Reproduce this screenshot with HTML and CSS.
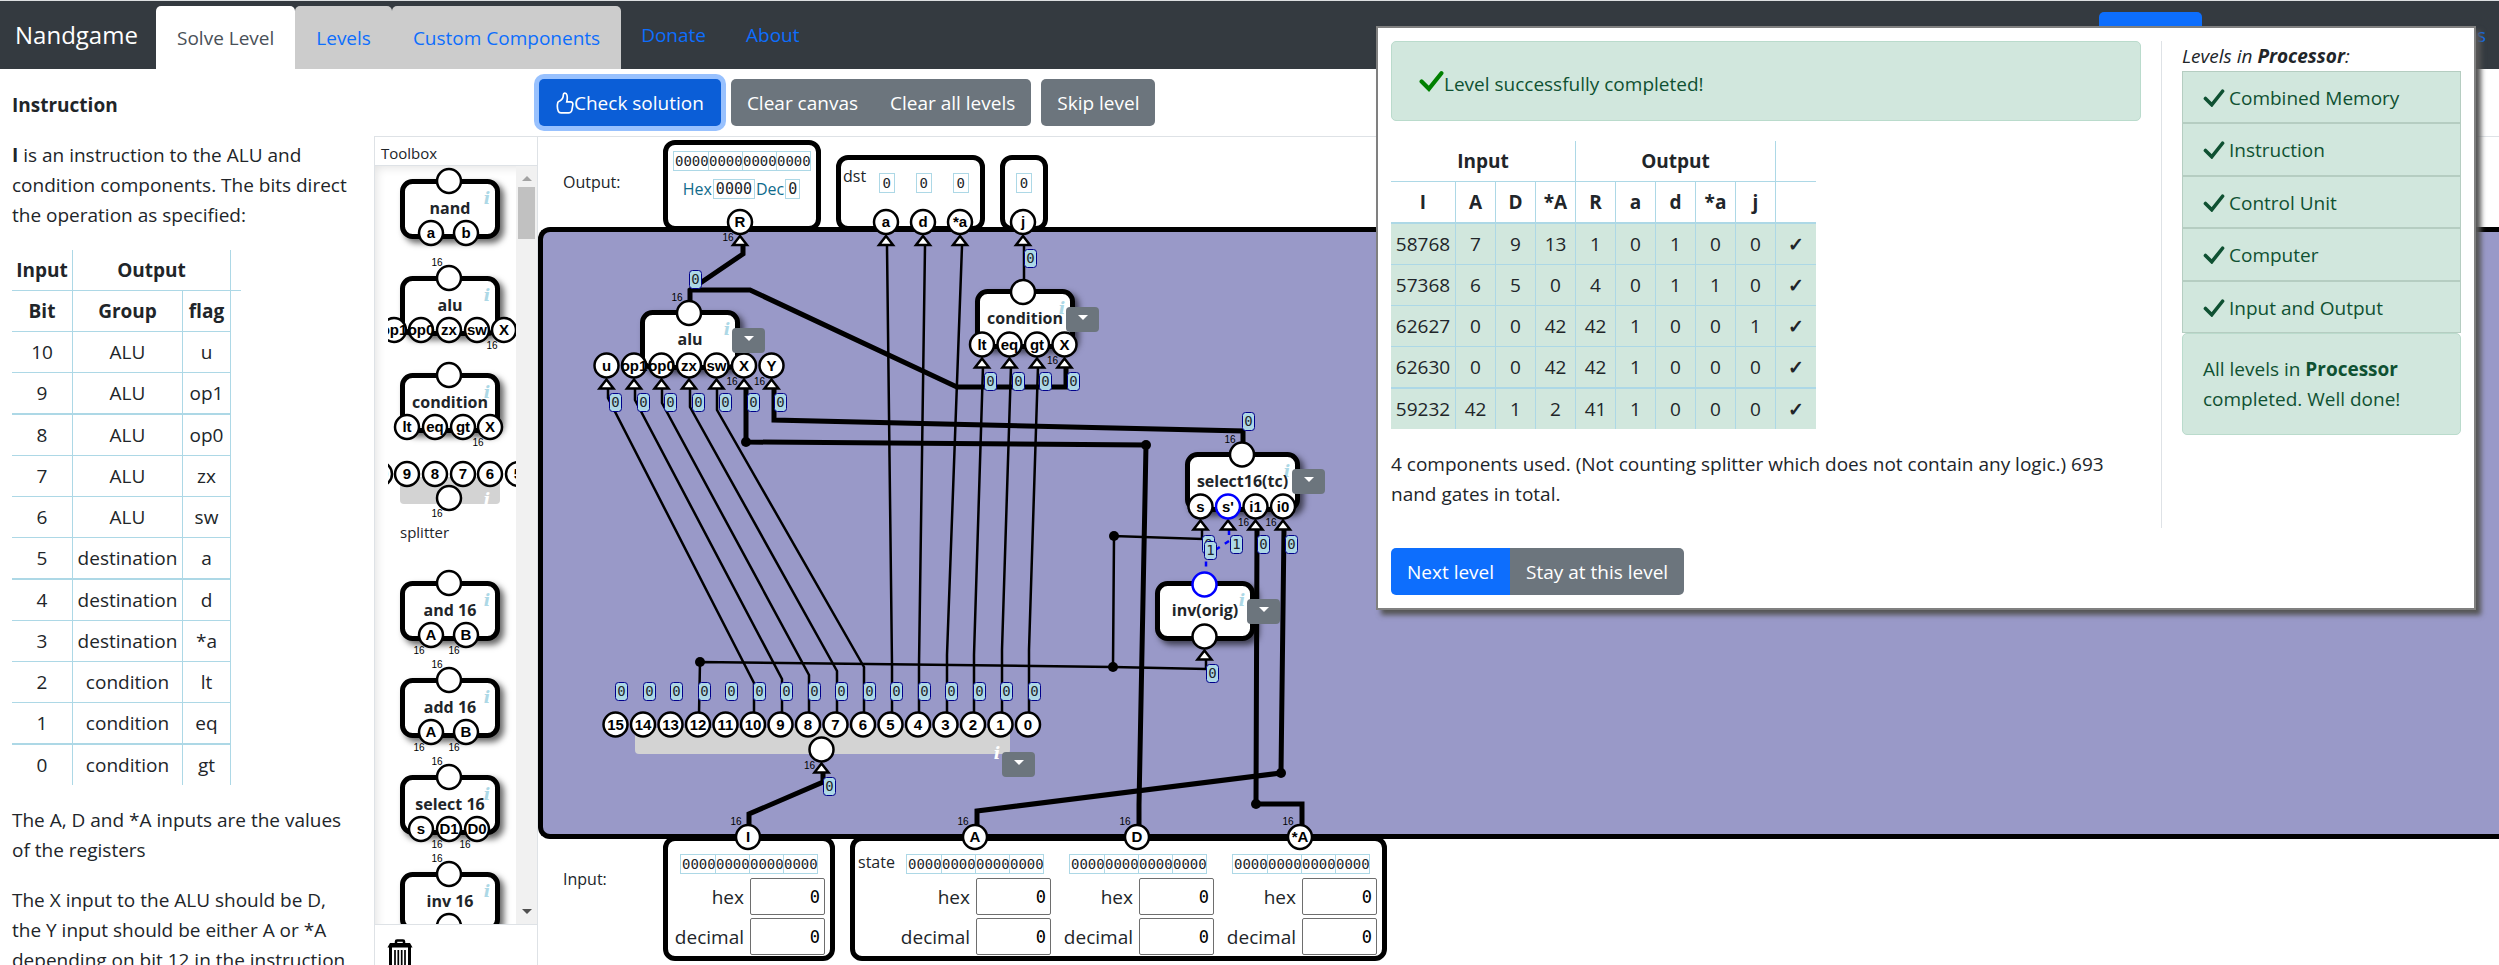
FILE: index.html
```html
<!DOCTYPE html>
<html lang="en">
<head>
<meta charset="utf-8">
<title>Nandgame</title>
<link rel="stylesheet" href="styles.css">
</head>
<body>
<header class="navbar">
  <span class="brand">Nandgame</span>
  <nav class="tabs">
    <a class="tab tab-active" href="#">Solve Level</a>
    <a class="tab" href="#">Levels</a>
    <a class="tab" href="#">Custom Components</a>
  </nav>
  <a class="nav-link" href="#">Donate</a>
  <a class="nav-link" href="#">About</a>
  <div class="nav-end">
    <button class="nav-button" type="button" aria-label="Account"></button>
    <a class="nav-more" href="#">s</a>
  </div>
</header>

<div class="page">
  <aside class="guide">
    <h1>Instruction</h1>
    <p><b>I</b> is an instruction to the ALU and condition components. The bits direct the operation as specified:</p>
    <table class="spec">
      <tr><th>Input</th><th colspan="2">Output</th><th class="stub"></th></tr>
      <tr><th>Bit</th><th>Group</th><th>flag</th></tr>
      <tr><td>10</td><td>ALU</td><td>u</td></tr>
      <tr><td>9</td><td>ALU</td><td>op1</td></tr>
      <tr><td>8</td><td>ALU</td><td>op0</td></tr>
      <tr><td>7</td><td>ALU</td><td>zx</td></tr>
      <tr><td>6</td><td>ALU</td><td>sw</td></tr>
      <tr><td>5</td><td>destination</td><td>a</td></tr>
      <tr><td>4</td><td>destination</td><td>d</td></tr>
      <tr><td>3</td><td>destination</td><td>*a</td></tr>
      <tr><td>2</td><td>condition</td><td>lt</td></tr>
      <tr><td>1</td><td>condition</td><td>eq</td></tr>
      <tr><td>0</td><td>condition</td><td>gt</td></tr>
    </table>
    <p>The A, D and *A inputs are the values of the registers</p>
    <p>The X input to the ALU should be D, the Y input should be either A or *A depending on bit 12 in the instruction</p>
  </aside>

  <main class="main">
    <div class="actions">
      <button class="btn btn-check" type="button"><svg class="thumb" viewBox="0 0 16 20" aria-hidden="true"><path d="M1.5 9.5C.8 12 .9 15 2 17.6c.4 1 1.3 1.4 2.4 1.4h6.8c1.6 0 2.6-.8 3-2.3l.9-5c.3-1.6-.5-2.7-2-2.7H9.600c.6-2.400.6-4.300.2-6.200C9.500 1.500 8.700.9 7.700 1c-.9.1-1.200.7-1.200 1.600 0 2.800-1.300 4.600-3.300 5.600-.8.300-1.400.700-1.700 1.300z"/></svg>Check solution</button>
      <div class="btn-group">
        <button class="btn" type="button">Clear canvas</button>
        <button class="btn" type="button">Clear all levels</button>
      </div>
      <button class="btn" type="button">Skip level</button>
    </div>

    <div class="lab">
      <section class="toolbox">
        <div class="toolbox-head">Toolbox</div>
        <div class="toolbox-body">
          <ul class="parts" id="parts"></ul>
          <div class="scroll"><span class="up"></span><span class="grip"></span><span class="down"></span></div>
        </div>
        <div class="bin">
          <svg viewBox="0 0 26 34" aria-label="Trash"><path d="M9 4V2.500Q9 1.500 10 1.500h6q1 0 1 1V4" fill="none" stroke="#000" stroke-width="2.500"/><path d="M3 4h20l2.500 4.500H.5z"/><path d="M3.500 8v20q0 4 4 4h11q4 0 4-4V8" fill="none" stroke="#000" stroke-width="3"/><path d="M8 11v17M11.300 11v17M14.700 11v17M18 11v17" stroke="#000" stroke-width="1.700"/></svg>
        </div>
      </section>

      <section class="workspace">
        <div class="ports outputs">
          <span class="ports-name">Output:</span>
          <div class="panel panel-r">
            <div class="bits"><span>0000</span><span>0000</span><span>0000</span><span>0000</span></div>
            <div class="readout">Hex<span class="digits">0000</span>Dec<span class="digits">0</span></div>
          </div>
          <div class="panel panel-dst">
            <span class="panel-name">dst</span>
            <span class="digits">0</span><span class="digits">0</span><span class="digits">0</span>
          </div>
          <div class="panel panel-j"><span class="digits">0</span></div>
        </div>

        <div class="board">
          <svg class="circuit" id="circuit" viewBox="543 232 1000 602"></svg>
          <div id="menus"></div>
        </div>

        <div class="ports inputs">
          <span class="ports-name">Input:</span>
          <div class="panel panel-in">
            <div class="register">
              <div class="bits"><span>0000</span><span>0000</span><span>0000</span><span>0000</span></div>
              <label>hex<input value="0"></label>
              <label>decimal<input value="0"></label>
            </div>
          </div>
          <div class="panel panel-in">
            <span class="panel-name">state</span>
            <div class="register">
              <div class="bits"><span>0000</span><span>0000</span><span>0000</span><span>0000</span></div>
              <label>hex<input value="0"></label>
              <label>decimal<input value="0"></label>
            </div>
            <div class="register">
              <div class="bits"><span>0000</span><span>0000</span><span>0000</span><span>0000</span></div>
              <label>hex<input value="0"></label>
              <label>decimal<input value="0"></label>
            </div>
            <div class="register">
              <div class="bits"><span>0000</span><span>0000</span><span>0000</span><span>0000</span></div>
              <label>hex<input value="0"></label>
              <label>decimal<input value="0"></label>
            </div>
          </div>
        </div>
      </section>
    </div>
  </main>
</div>

<div class="dialog" role="dialog" aria-label="Level result">
  <div class="result">
    <div class="alert"><svg class="tick tick-big" viewBox="0 0 24 20"><path d="M2.500 10.500l7 7L21.500 2.500"/></svg>Level successfully completed!</div>
    <table class="tests">
      <tr><th colspan="4">Input</th><th colspan="5">Output</th><th></th></tr>
      <tr><th>I</th><th>A</th><th>D</th><th>*A</th><th>R</th><th>a</th><th>d</th><th>*a</th><th>j</th><th></th></tr>
      <tr><td>58768</td><td>7</td><td>9</td><td>13</td><td>1</td><td>0</td><td>1</td><td>0</td><td>0</td><td>✓</td></tr>
      <tr><td>57368</td><td>6</td><td>5</td><td>0</td><td>4</td><td>0</td><td>1</td><td>1</td><td>0</td><td>✓</td></tr>
      <tr><td>62627</td><td>0</td><td>0</td><td>42</td><td>42</td><td>1</td><td>0</td><td>0</td><td>1</td><td>✓</td></tr>
      <tr><td>62630</td><td>0</td><td>0</td><td>42</td><td>42</td><td>1</td><td>0</td><td>0</td><td>0</td><td>✓</td></tr>
      <tr><td>59232</td><td>42</td><td>1</td><td>2</td><td>41</td><td>1</td><td>0</td><td>0</td><td>0</td><td>✓</td></tr>
    </table>
    <p>4 components used. (Not counting splitter which does not contain any logic.) 693 nand gates in total.</p>
  </div>
  <div class="chapter">
    <div class="chapter-name"><i>Levels in <b>Processor</b>:</i></div>
    <ul class="levels">
      <li><svg class="tick" viewBox="0 0 24 20"><path d="M2.500 10.500l7 7L21.500 2.500"/></svg>Combined Memory</li>
      <li><svg class="tick" viewBox="0 0 24 20"><path d="M2.500 10.500l7 7L21.500 2.500"/></svg>Instruction</li>
      <li><svg class="tick" viewBox="0 0 24 20"><path d="M2.500 10.500l7 7L21.500 2.500"/></svg>Control Unit</li>
      <li><svg class="tick" viewBox="0 0 24 20"><path d="M2.500 10.500l7 7L21.500 2.500"/></svg>Computer</li>
      <li><svg class="tick" viewBox="0 0 24 20"><path d="M2.500 10.500l7 7L21.500 2.500"/></svg>Input and Output</li>
    </ul>
    <div class="alert alert-done"><span>All levels in <b>Processor</b> completed. Well done!</span></div>
  </div>
  <div class="dialog-actions">
    <button class="btn btn-primary" type="button">Next level</button><button class="btn" type="button">Stay at this level</button>
  </div>
</div>
<script src="script.js"></script>
</body>
</html>
```

FILE: styles.css
```css
* { box-sizing: border-box; }

body {
  margin: 0;
  height: 100vh;
  overflow: hidden;
  display: flex;
  flex-direction: column;
  position: relative;
  background: #fff;
  color: #212529;
  font: 19px/30px "Open Sans", "Noto Sans", sans-serif;
}

a { color: #0d6efd; text-decoration: none; }
p { margin: 0 0 20px; }
ul { margin: 0; padding: 0; list-style: none; }

/* navigation */
.navbar {
  flex: none;
  display: flex;
  align-items: center;
  height: 69px;
  padding-left: 15px;
  border-top: 1px solid #dcdfe1;
  background: #343a40;
}
.brand { width: 141px; color: #fff; font-size: 24px; }
.tabs { display: flex; align-self: flex-end; }
.tab {
  display: flex;
  align-items: center;
  height: 63px;
  padding: 0 21px;
  border-radius: 5px 5px 0 0;
  background: #ccc;
}
.tab-active { background: #fff; color: #495057; }
.nav-link { padding: 0 20px; }
.nav-end { display: flex; margin-left: auto; align-items: center; padding-right: 13px; gap: 275px; }
.nav-button { width: 103px; height: 47px; border: 0; border-radius: 5px; background: #0d6efd; }

.page { flex: 1; min-height: 0; display: flex; }

/* instructions */
.guide { flex: none; width: 374px; padding: 21px 16px 0 12px; }
.guide h1 { margin: 0 0 20px; font-size: 19px; line-height: 30px; }

table { border-collapse: separate; border-spacing: 0; text-align: center; }
th, td {
  height: 41px;
  padding: 5px 3px;
  border-bottom: 1px solid #add8e6;
  border-right: 1px solid #add8e6;
}
tr:last-child td { height: 40px; border-bottom: 0; }
.spec { margin-bottom: 20px; }
.spec tr:nth-child(4n) td { height: 42px; border-bottom-width: 2px; }
.spec .stub { padding: 0 5px; border-right: 0; }
.spec td:first-child { width: 61px; }
.spec td:nth-child(2) { width: 110px; }
.spec td:nth-child(3) { width: 48px; }

/* toolbar */
.main { flex: 1; min-width: 0; display: flex; flex-direction: column; }
.actions { flex: none; display: flex; gap: 10px; padding: 10px 0 10px 165px; }
.btn {
  height: 47px;
  padding: 0 16px;
  border: 0;
  border-radius: 5px;
  background: #6c757d;
  color: #fff;
  font: inherit;
  white-space: nowrap;
}
.btn-check {
  display: flex;
  align-items: center;
  padding: 0 17px;
  background: #0b5ed7;
  box-shadow: 0 0 0 5px #98c1fe;
}
.btn-primary { background: #0d6efd; }
.btn-group { display: flex; }
.btn-group .btn:first-child, .dialog-actions .btn:first-child { border-radius: 5px 0 0 5px; }
.btn-group .btn:last-child, .dialog-actions .btn:last-child { border-radius: 0 5px 5px 0; }
.thumb { width: 18px; height: 22px; fill: none; stroke: #fff; stroke-width: 1.5; }

.lab { flex: 1; min-height: 0; display: flex; border-top: 1px solid #dee2e6; }

/* toolbox */
.toolbox {
  flex: none;
  width: 164px;
  display: flex;
  flex-direction: column;
  border-left: 1px solid #dee2e6;
  border-right: 1px solid #dee2e6;
}
.toolbox-head { height: 29px; padding: 2px 6px; border-bottom: 1px solid #dee2e6; font-size: 15px; line-height: 28px; }
.toolbox-body { flex: 1; min-height: 0; display: flex; box-shadow: inset 6px 6px 10px -4px #e4e4e4; }
.parts { flex: 1; overflow: hidden; margin-left: 13px; }
.parts svg { display: block; width: 128px; overflow: visible; }
.scroll { width: 21px; padding: 10px 2px; display: flex; flex-direction: column; align-items: center; background: #f1f1f1; }
.up, .down { border: 5px solid transparent; }
.up { border-top: 0; border-bottom-color: #a3a3a3; }
.down { margin-top: auto; border-bottom: 0; border-top-color: #505050; }
.grip { width: 17px; height: 52px; margin-top: 6px; background: #c1c1c1; }
.bin { height: 41px; padding: 14px 12px; border-top: 1px solid #dee2e6; overflow: hidden; }
.bin svg { display: block; width: 26px; height: 34px; }

/* ports around the board */
.workspace { flex: 1; min-width: 0; display: flex; flex-direction: column; }
.ports { flex: none; display: flex; gap: 15px; padding-left: 25px; }
.ports-name { width: 85px; font-size: 16px; }
.outputs { height: 90px; align-items: flex-end; }
.outputs .ports-name { align-self: center; line-height: 36px; }
.inputs .ports-name { padding-top: 25px; }
.panel { border: 5px solid #000; border-radius: 12px; background: #fff; display: flex; }
.outputs .panel { margin-bottom: -4px; }
.panel-r { width: 158px; height: 91px; flex-direction: column; align-items: center; padding-top: 6px; gap: 8px; }
.panel-dst { width: 149px; height: 76px; padding: 13px 10px 0 2px; justify-content: space-between; }
.panel-dst .panel-name { width: 16px; margin-top: -12px; }
.panel-j { width: 48px; height: 76px; padding-top: 13px; justify-content: center; }
.panel-name { font-size: 16px; }
.bits { display: flex; border: 1px solid #add8e6; }
.bits span {
  width: 34px;
  height: 18px;
  border-left: 1px solid #add8e6;
  font: 14px/18px "DejaVu Sans Mono", monospace;
}
.bits span:first-child { border-left-color: transparent; }
.readout { display: flex; align-items: center; font-size: 16px; line-height: 20px; color: #106b8c; }
.digits {
  height: 20px;
  margin: 0 1px;
  padding: 0 3px;
  border: 1px solid #add8e6;
  color: #212529;
  font: 14px/18px "DejaVu Sans Mono", monospace;
}
.readout .digits { padding: 0 2px; font-size: 15px; }
.panel-in { margin-top: -3px; padding: 13px 5px 0 11px; gap: 17px; height: 125px; }
.panel-in .panel-name { width: 36px; margin: -7px -6px 0 -8px; }
.register { width: 146px; display: flex; flex-direction: column; align-items: flex-end; gap: 3px; }
.register .bits { margin-right: 7px; margin-bottom: 1px; }
.register label { display: flex; align-items: center; gap: 6px; height: 37px; }
.register input {
  width: 75px;
  height: 37px;
  padding: 0 4px;
  border: 1px solid #6e6e6e;
  border-radius: 2px;
  text-align: right;
  font: 17px "DejaVu Sans Mono", monospace;
}

/* circuit */
.board {
  flex: none;
  position: relative;
  z-index: 1;
  height: 612px;
  border: 5px solid #000;
  border-right: 0;
  border-radius: 12px 0 0 12px;
  background: #9999c8;
}
.circuit { display: block; width: 1000px; height: 602px; overflow: visible; }
.wire { fill: none; stroke: #000; stroke-width: 2.5; }
.bus { stroke-width: 5; }
.live { stroke: #00f; stroke-width: 2.5; stroke-dasharray: 5 6; }
.body { fill: #fff; stroke: #000; stroke-width: 5; filter: drop-shadow(4px 4px 3px rgba(0, 0, 0, .6)); }
.strip { fill: #d3d3d3; }
.pin circle { fill: #fff; stroke: #000; stroke-width: 2.5; }
.pin.on circle { stroke: #00f; }
.pin text { font: bold 15px "Liberation Sans", Arial, sans-serif; fill: #000; text-anchor: middle; }
.pin .width { font: 10px "Liberation Sans", Arial, sans-serif; }
.arrow { fill: #fff; stroke: #000; stroke-width: 2.5; }
.title { font: bold 16px "Open Sans", "Noto Sans", sans-serif; fill: #212529; text-anchor: middle; }
.caption { font: 15px "Open Sans", "Noto Sans", sans-serif; fill: #212529; }
.info { font: italic bold 17px "DejaVu Serif", serif; fill: #add8e6; text-anchor: middle; }
.info-light { fill: #fff; }
.tag rect { fill: #add8e6; stroke: #00008b; stroke-width: 1; }
.tag text { font: 14px "DejaVu Sans Mono", monospace; fill: #212529; text-anchor: middle; }
.menu {
  position: absolute;
  width: 33px;
  height: 25px;
  padding: 0 0 5px;
  border: 0;
  border-radius: 4px;
  background: #6c757d;
  display: flex;
  align-items: center;
  justify-content: center;
}
.menu::before { content: ""; border: 5px solid transparent; border-top-color: #fff; border-bottom: 0; }

/* result dialog */
.dialog {
  position: absolute;
  z-index: 2;
  top: 26px;
  right: 23px;
  width: 1100px;
  padding: 13px;
  border: 2px solid #808080;
  background: #fff;
  box-shadow: 5px 5px 5px #555;
  display: grid;
  grid-template-columns: 1fr 300px;
}
.result { padding-right: 20px; }
.result p { margin: 20px 0 19px; }
.alert {
  display: flex;
  align-items: center;
  height: 80px;
  padding: 6px 27px 0;
  border: 1px solid #badbcc;
  border-radius: 5px;
  background: #d1e7dd;
  color: #0f5132;
}
.tick { width: 22px; height: 18px; margin-right: 4px; fill: none; stroke: #0f5132; stroke-width: 4; stroke-linecap: round; }
.tick-big { width: 25px; height: 22px; margin: 0 0 6px; stroke: #008000; }
.tests { margin-top: 20px; }
.tests th, .tests td { width: 40px; padding: 5px 0; }
.tests td:first-child { width: 65px; }
.tests tr > :last-child { border-right: 0; }
.tests td:last-child { font-weight: bold; }
.tests td { background: #d1e7dd; }
.tests tr:nth-child(4n+2) > * { height: 42px; border-bottom-width: 2px; }
.chapter { padding-left: 20px; border-left: 1px solid #dee2e6; }
.levels li {
  display: flex;
  align-items: center;
  height: 52px;
  padding: 1px 20px 0;
  border: 1px solid #b5cdc1;
  background: #d1e7dd;
  color: #0f5132;
}
.levels li:nth-child(even) { height: 53px; }
.alert-done { height: 102px; padding: 0 20px; }
.dialog-actions { grid-column: 1 / 3; display: flex; padding-top: 20px; }
```

FILE: script.js
```js
const g = (cls, inner) => `<g class="${cls}">${inner}</g>`;

function pin(x, y, label = '', opts = {}) {
  let s = '';
  if (opts.arrow) s += `<path class="arrow" d="M${x} ${y + 14}l7 9h-14z"/>`;
  s += `<circle cx="${x}" cy="${y}" r="12"/>`;
  if (label) s += `<text x="${x}" y="${y + 5}">${label}</text>`;
  if (opts.wide) s += `<text class="width" x="${x - 12}" y="${y + (opts.wide === 'up' ? -12 : 19)}">16</text>`;
  return g('pin' + (opts.on ? ' on' : ''), s);
}

function box(x, y, w, title) {
  return `<rect class="body" x="${x + 2.5}" y="${y + 2.5}" width="${w - 5}" height="55" rx="10"/>` +
    `<text class="info" x="${x + w - 13}" y="${y + 25}">i</text>` +
    `<text class="title" x="${x + w / 2}" y="${y + 35}">${title}</text>`;
}

const tag = (x, y, v = 0) =>
  g('tag', `<rect x="${x + 0.5}" y="${y + 0.5}" width="12" height="18" rx="3"/><text x="${x + 6.5}" y="${y + 14}">${v}</text>`);

/* toolbox parts */
const parts = [
  ['nand', false, [['a', 43], ['b', 78]]],
  ['alu', true, [['op1', 6], ['op0', 33], ['zx', 61], ['sw', 89], ['X', 116, true]]],
  ['condition', false, [['lt', 19], ['eq', 47], ['gt', 75], ['X', 102, true]]],
  null,
  ['and 16', false, [['A', 43, true], ['B', 78, true]]],
  ['add 16', true, [['A', 43, true], ['B', 78, true]]],
  ['select 16', true, [['s', 33], ['D1', 61, true], ['D0', 89, true]]],
  ['inv 16', true, [['', 61]]]
];

const splitter = '<rect class="strip" x="12" y="20" width="100" height="27" rx="4"/>' +
  '<text class="info info-light" x="99" y="48">i</text>' +
  [['10', -8], ['9', 19], ['8', 47], ['7', 75], ['6', 102], ['5', 130]].map(p => pin(p[1], 17, p[0])).join('') +
  pin(61, 41, '', { wide: 'down' }) + '<text class="caption" x="12" y="81">splitter</text>';

document.getElementById('parts').innerHTML = parts.map(p => {
  if (!p) return `<li><svg height="111">${splitter}</svg></li>`;
  const [name, wide, pins] = p;
  return `<li><svg height="97">${box(12, 13, 100, name)}${pin(61, 15, '', { wide: wide && 'up' })}` +
    pins.map(q => pin(q[1], 67, q[0], { wide: q[2] && 'down' })).join('') + '</svg></li>';
}).join('');

/* wires */
const buses = [
  '690,310 690,290 743,254 743,244', '690,290 750,290 957,387 1066,387 1066,368',
  '746,386 746,442 1146,445 1139,805 1139,826', '774,386 774,420 1243,431 1243,444',
  '1257,528 1256,804 1302,804 1302,826', '1284,528 1281,773 977,811 977,826',
  '823,770 823,782 749,814 749,826'
];
const wires = [
  '887,246 892,665 892,714', '925,246 919,665 919,714', '962,246 947,655 947,714',
  '983,366 974,655 974,714', '1011,366 1002,650 1002,714', '1038,366 1029,650 1029,714',
  '1024,244 1024,282',
  '608,386 608,398 754,683 754,714', '635,386 635,400 782,679 782,714', '662,386 662,403 809,675 809,714',
  '690,386 690,407 837,671 837,714', '717,386 717,410 864,667 864,714',
  '699,714 700,662 1113,667 1206,669 1206,658', '1113,667 1114,536 1202,539 1202,528'
];
const dots = [[746, 442], [1146, 445], [1256, 804], [1281, 773], [700, 662], [1113, 667], [1114, 536]];

let art = buses.map(p => `<polyline class="wire bus" points="${p}"/>`).join('') +
  wires.map(p => `<polyline class="wire" points="${p}"/>`).join('') +
  dots.map(d => `<circle cx="${d[0]}" cy="${d[1]}" r="5"/>`).join('') +
  '<polyline class="wire live" points="1229,530 1229,541 1206,556 1206,574"/>';

/* components */
const up = { arrow: true };
const upWide = { arrow: true, wide: 'down' };

art += box(640, 310, 100, 'alu') + pin(689, 313, '', { wide: 'up' }) +
  ['u', 'op1', 'op0', 'zx', 'sw', 'X', 'Y'].map((n, i) => pin(606.5 + i * 27.5, 365.5, n, i > 4 ? upWide : up)).join('');
art += box(975, 289, 100, 'condition') + pin(1023, 292) +
  ['lt', 'eq', 'gt', 'X'].map((n, i) => pin(982 + i * 27.5, 344.5, n, i > 2 ? upWide : up)).join('');
art += box(1185, 452, 115, 'select16(tc)') + pin(1242, 454.5, '', { wide: 'up' }) +
  ['s', "s'", 'i1', 'i0'].map((n, i) => pin(1200.5 + i * 27.5, 506.5, n, { arrow: true, wide: i > 1 && 'down', on: i === 1 })).join('');
art += box(1155, 581, 100, 'inv(orig)') + pin(1204.5, 584.5, '', { on: true }) + pin(1204.5, 636.5, '', up);
art += '<rect class="strip" x="635" y="728" width="375" height="26" rx="4"/><text class="info info-light" x="997" y="759">i</text>';
for (let i = 0; i < 16; i++) art += pin(615.5 + i * 27.5, 724.5, String(15 - i));
art += pin(821.5, 749.5, '', upWide);

/* board edge pins */
art += pin(740, 222, 'R', upWide) + pin(886, 222, 'a', up) + pin(923, 222, 'd', up) + pin(960, 222, '*a', up) + pin(1023, 222, 'j', up);
art += [['I', 748], ['A', 975], ['D', 1137], ['*A', 1300]].map(p => pin(p[1], 837, p[0], { wide: 'up' })).join('');

/* live values */
for (let i = 0; i < 7; i++) art += tag(609 + Math.round(i * 27.5), 393);
for (let i = 0; i < 4; i++) art += tag(984 + Math.round(i * 27.5), 372);
for (let i = 0; i < 16; i++) art += tag(615 + Math.round(i * 27.5), 682);
art += tag(689, 270) + tag(1024, 249) + tag(1242, 412) + tag(823, 777) + tag(1206, 664);
art += tag(1202, 535) + tag(1230, 535, 1) + tag(1257, 535) + tag(1285, 535) + tag(1204, 541, 1);

document.getElementById('circuit').innerHTML = art;

/* component menus, placed from board coordinates */
document.getElementById('menus').innerHTML = [[732, 328], [1066, 307], [1292, 469], [1247, 599], [1002, 752]]
  .map(([x, y]) => `<button class="menu" type="button" aria-label="Component menu" style="left:${x - 543}px;top:${y - 232}px"></button>`).join('');
```
